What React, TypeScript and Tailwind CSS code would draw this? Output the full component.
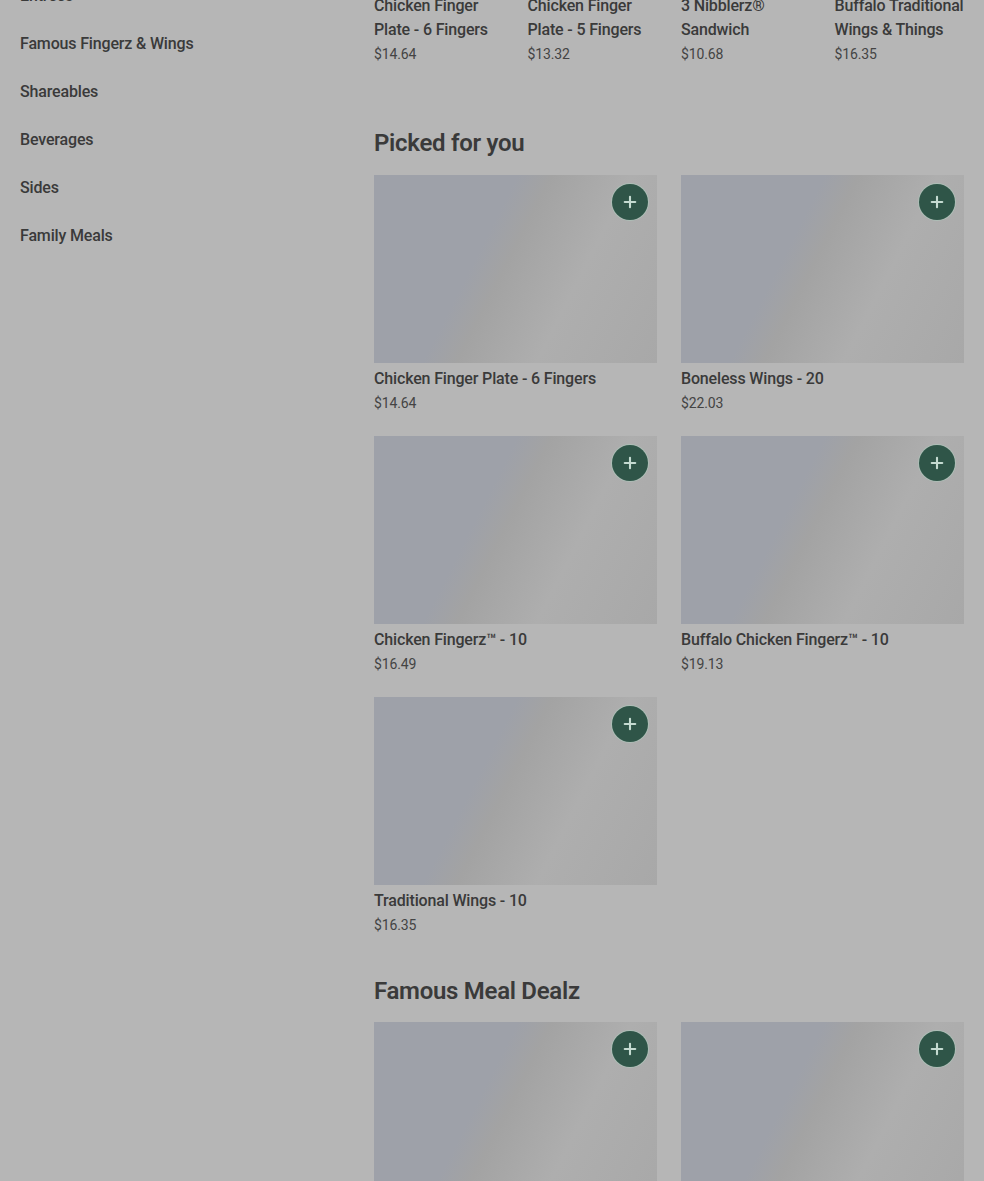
import { Plus } from 'lucide-react';

const categories = ['Entrees', 'Famous Fingerz & Wings', 'Shareables', 'Beverages', 'Sides', 'Family Meals'];

const popular = [
  { name: 'Chicken Finger Plate - 6 Fingers', price: '$14.64' },
  { name: 'Chicken Finger Plate - 5 Fingers', price: '$13.32' },
  { name: '3 Nibblerz® Sandwich', price: '$10.68' },
  { name: 'Buffalo Traditional Wings & Things', price: '$16.35' },
];

const picked = [
  { name: 'Chicken Finger Plate - 6 Fingers', price: '$14.64' },
  { name: 'Boneless Wings - 20', price: '$22.03' },
  { name: 'Chicken Fingerz™ - 10', price: '$16.49' },
  { name: 'Buffalo Chicken Fingerz™ - 10', price: '$19.13' },
  { name: 'Traditional Wings - 10', price: '$16.35' },
];

function ItemCard({ name, price }: { name: string; price: string }) {
  return (
    <div>
      <div className="relative h-[188px] bg-[linear-gradient(117deg,#9ea1a9_0%,#9ea1a9_38%,#a3a3a3_47%,#aeaeae_68%,#a8a8a8_100%)]">
        <button className="absolute top-[9px] right-[9px] w-9 h-9 rounded-full bg-[#2f5548] text-[#c5dbd1] ring-1 ring-[#adbeb6] flex items-center justify-center">
          <Plus size={18} strokeWidth={2.8} />
        </button>
      </div>
      <p className="mt-1 text-base leading-6 font-medium tracking-[-0.01em] text-[#3a3a3a]">{name}</p>
      <p className="mt-0.5 text-sm leading-5 tracking-[-0.01em] text-[#444444]">{price}</p>
    </div>
  );
}

export default function App() {
  return (
    <div className="h-[1181px] overflow-hidden bg-[#b6b6b6] font-['Roboto',sans-serif]">
      <div className="flex -mt-7">
        <nav className="w-[374px] shrink-0 pl-5">
          {categories.map(c => (
            <div key={c} className="h-12 flex items-center text-base font-medium tracking-[-0.01em] text-[#3a3a3a]">{c}</div>
          ))}
        </nav>
        <main className="w-[590px] pt-[22px]">
          <div className="grid grid-cols-4 gap-x-6">
            {popular.map(item => (
              <div key={item.name}>
                <p className="text-base leading-6 font-medium tracking-[-0.01em] text-[#3a3a3a]">{item.name}</p>
                <p className="mt-0.5 text-sm leading-5 tracking-[-0.01em] text-[#444444]">{item.price}</p>
              </div>
            ))}
          </div>
          <h2 className="mt-[63px] mb-4 text-2xl leading-8 font-semibold tracking-[-0.012em] text-[#3a3a3a]">Picked for you</h2>
          <div className="grid grid-cols-2 gap-x-6 gap-y-[23px]">
            {picked.map(item => <ItemCard key={item.name} {...item} />)}
          </div>
          <h2 className="mt-10 mb-[15px] text-2xl leading-8 font-semibold tracking-[-0.012em] text-[#3a3a3a]">Famous Meal Dealz</h2>
          <div className="grid grid-cols-2 gap-x-6 gap-y-[23px]">
            <ItemCard name="Famous Meal Deal" price="$14.64" />
            <ItemCard name="Famous Meal Deal" price="$14.64" />
          </div>
        </main>
      </div>
    </div>
  );
}
